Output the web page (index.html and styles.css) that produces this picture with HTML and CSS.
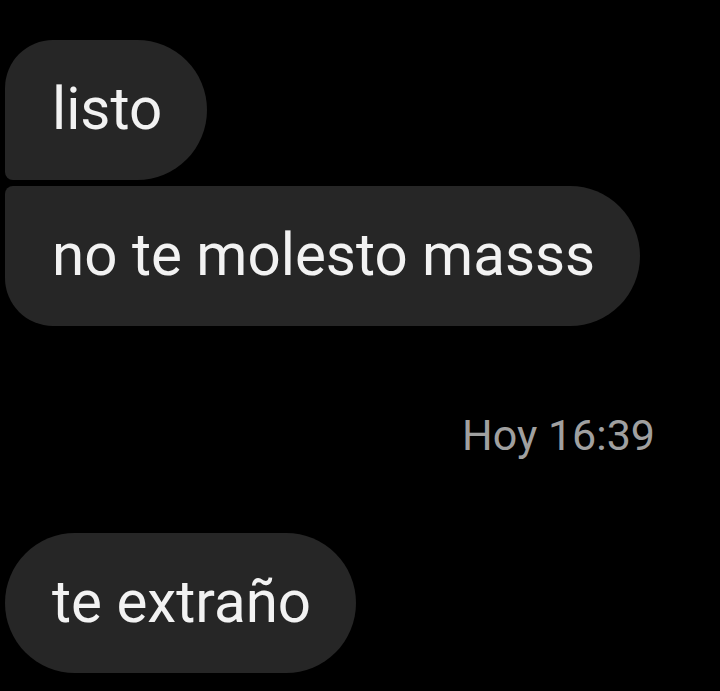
FILE: index.html
```html
<!DOCTYPE html>
<html lang="es">
<head>
<meta charset="utf-8">
<title>Chat</title>
<link rel="stylesheet" href="styles.css">
</head>
<body>
<main class="chat">
  <div class="group">
    <div class="bubble first">listo</div>
    <div class="bubble last">no te molesto masss</div>
  </div>
  <div class="time">Hoy 16:39</div>
  <div class="bubble single">te extraño</div>
</main>
</body>
</html>
```
FILE: styles.css
```css
html, body {
  margin: 0;
  padding: 0;
  background: #000;
  height: 100%;
}
.chat {
  display: flex;
  flex-direction: column;
  align-items: flex-start;
  padding: 40px 0 0 5px;
  font-family: Roboto, "Noto Sans", sans-serif;
}
.group {
  display: flex;
  flex-direction: column;
  align-items: flex-start;
  gap: 6px;
}
.bubble {
  box-sizing: border-box;
  height: 140px;
  display: flex;
  align-items: center;
  padding: 0 45px 2px 47px;
  background: #262626;
  color: #f2f2f2;
  font-size: 58.3px;
  line-height: 1;
  border-radius: 70px;
  white-space: nowrap;
}
.bubble.first {
  border-radius: 48px 70px 70px 8px;
}
.bubble.last {
  border-radius: 8px 70px 70px 48px;
}
.time {
  align-self: flex-end;
  margin: 84px 65px 73px 0;
  color: #a0a0a0;
  font-size: 43px;
  line-height: 50px;
}
```
